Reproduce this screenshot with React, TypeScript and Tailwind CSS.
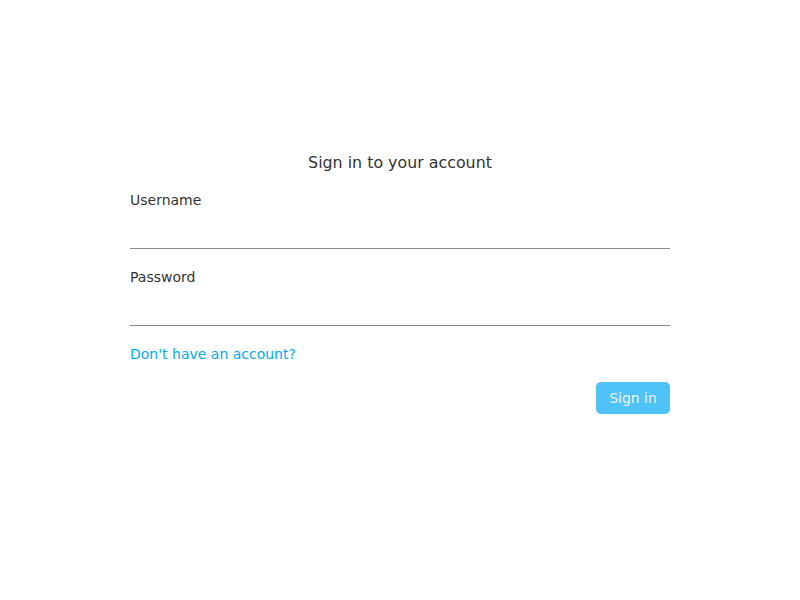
import React from "react";

export default function App() {
  return (
    <div className="min-h-[600px] w-full bg-white" style={{ fontFamily: '"DejaVu Sans", sans-serif' }}>
      <div className="mx-auto w-[540px] pt-[151px]">
        <h1 className="h-6 text-center text-[15.85px] leading-6 font-normal text-[#333333]">Sign in to your account</h1>
        <label className="mt-[15px] block text-sm leading-5 text-[#333333]">Username</label>
        <input className="block h-[39px] w-full border-b border-[#8a8a8a] bg-transparent text-sm text-[#333333] outline-none" />
        <label className="mt-[18px] block text-sm leading-5 text-[#333333]">Password</label>
        <input type="password" className="block h-[39px] w-full border-b border-[#8a8a8a] bg-transparent text-sm text-[#333333] outline-none" />
        <a className="mt-[18px] block text-sm leading-5 text-[#03a9f4]">Don't have an account?</a>
        <div className="mt-[18px] flex justify-end">
          <button className="h-8 w-[74px] rounded-[5px] bg-[#4fc3f7] text-sm text-[#eaf7fe]">Sign in</button>
        </div>
      </div>
    </div>
  );
}
